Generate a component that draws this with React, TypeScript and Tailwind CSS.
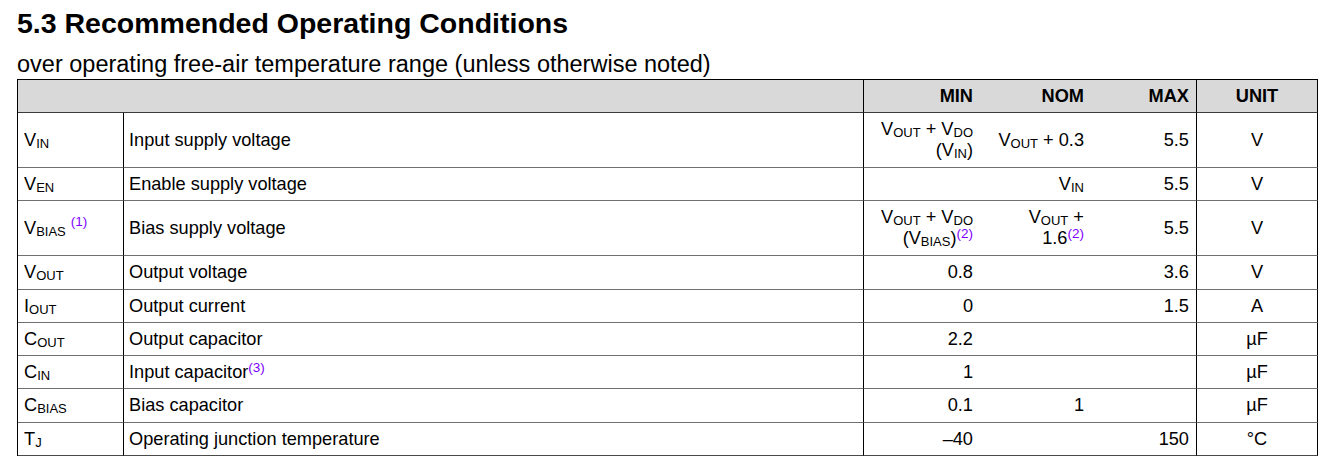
import React from "react";

const Sub = ({ children }: { children: React.ReactNode }) => (
  <span className="text-[13px] leading-[0] align-[-2px]">{children}</span>
);

const Sup = ({ children, raise = "r6" }: { children: React.ReactNode; raise?: string }) => (
  <span
    className={
      "text-[13.5px] leading-[0] text-[#8000ff] " +
      (raise === "r8" ? "align-[8px]" : "align-[6px]")
    }
  >
    {children}
  </span>
);

type Row = {
  sym: React.ReactNode;
  desc: React.ReactNode;
  min?: React.ReactNode;
  nom?: React.ReactNode;
  max?: React.ReactNode;
  unit: React.ReactNode;
};

const rows: Row[] = [
  {
    sym: (
      <>
        V<Sub>IN</Sub>
      </>
    ),
    desc: "Input supply voltage",
    min: (
      <div className="leading-[21px]">
        <div>
          V<Sub>OUT</Sub> + V<Sub>DO</Sub>
        </div>
        <div>
          (V<Sub>IN</Sub>)
        </div>
      </div>
    ),
    nom: (
      <span>
        V<Sub>OUT</Sub> + 0.3
      </span>
    ),
    max: "5.5",
    unit: "V",
  },
  {
    sym: (
      <>
        V<Sub>EN</Sub>
      </>
    ),
    desc: "Enable supply voltage",
    nom: (
      <span>
        V<Sub>IN</Sub>
      </span>
    ),
    max: "5.5",
    unit: "V",
  },
  {
    sym: (
      <>
        V<Sub>BIAS</Sub> <Sup raise="r8">(1)</Sup>
      </>
    ),
    desc: "Bias supply voltage",
    min: (
      <div className="leading-[21px]">
        <div>
          V<Sub>OUT</Sub> + V<Sub>DO</Sub>
        </div>
        <div>
          (V<Sub>BIAS</Sub>)<Sup>(2)</Sup>
        </div>
      </div>
    ),
    nom: (
      <div className="leading-[21px]">
        <div>
          V<Sub>OUT</Sub> +
        </div>
        <div>
          1.6<Sup>(2)</Sup>
        </div>
      </div>
    ),
    max: "5.5",
    unit: "V",
  },
  {
    sym: (
      <>
        V<Sub>OUT</Sub>
      </>
    ),
    desc: "Output voltage",
    min: "0.8",
    max: "3.6",
    unit: "V",
  },
  {
    sym: (
      <>
        I<Sub>OUT</Sub>
      </>
    ),
    desc: "Output current",
    min: "0",
    max: "1.5",
    unit: "A",
  },
  {
    sym: (
      <>
        C<Sub>OUT</Sub>
      </>
    ),
    desc: "Output capacitor",
    min: "2.2",
    unit: "µF",
  },
  {
    sym: (
      <>
        C<Sub>IN</Sub>
      </>
    ),
    desc: (
      <>
        Input capacitor<Sup>(3)</Sup>
      </>
    ),
    min: "1",
    unit: "µF",
  },
  {
    sym: (
      <>
        C<Sub>BIAS</Sub>
      </>
    ),
    desc: "Bias capacitor",
    min: "0.1",
    nom: "1",
    unit: "µF",
  },
  {
    sym: (
      <>
        T<Sub>J</Sub>
      </>
    ),
    desc: "Operating junction temperature",
    min: "–40",
    max: "150",
    unit: "°C",
  },
];

export default function App() {
  return (
    <div
      className="w-[1336px] h-[469px] bg-white text-black pl-[17px] pt-[7px]"
      style={{ fontFamily: '"Liberation Sans", Arial, sans-serif' }}
    >
      <h1 className="text-[28.5px] leading-[32px] font-bold">
        5.3 Recommended Operating Conditions
      </h1>
      <p className="mt-[11px] text-[23.5px] leading-[28px]">
        over operating free-air temperature range (unless otherwise noted)
      </p>
      <div className="mt-[1px] w-[1301px] grid grid-cols-[106px_740px_115px_111px_107px_121px] grid-rows-[33px_55px_33px_55px_34px_33px_33px_33px_34px_33px] border-t border-l border-black text-[18.2px] leading-[21px]">
        {/* header */}
        <div className="col-span-2 bg-[#d9d9d9] border-b border-b-[#3a3a3a] border-r border-r-black" />
        <div className="bg-[#d9d9d9] border-b border-[#3a3a3a] flex items-center justify-end pr-[6px] font-bold">
          MIN
        </div>
        <div className="bg-[#d9d9d9] border-b border-[#3a3a3a] flex items-center justify-end pr-[6px] font-bold">
          NOM
        </div>
        <div className="bg-[#d9d9d9] border-b border-b-[#3a3a3a] border-r border-r-black flex items-center justify-end pr-[7px] font-bold">
          MAX
        </div>
        <div className="bg-[#d9d9d9] border-b border-b-[#3a3a3a] border-r border-r-black flex items-center justify-center font-bold">
          UNIT
        </div>
        {rows.map((r, i) => {
          const last = i === rows.length - 1;
          const hb = last ? "border-b-[#4a4a4a]" : "border-b-[#707070]";
          return (
            <React.Fragment key={i}>
              <div className={"border-b border-r border-r-black flex items-center pl-[6px] whitespace-nowrap " + hb}>
                <span>{r.sym}</span>
              </div>
              <div className={"border-b border-r border-r-black flex items-center pl-[5px] whitespace-nowrap " + hb}>
                <span>{r.desc}</span>
              </div>
              <div className={"border-b flex items-center justify-end text-right pr-[6px] whitespace-nowrap " + hb}>
                {r.min}
              </div>
              <div className={"border-b flex items-center justify-end text-right pr-[6px] whitespace-nowrap " + hb}>
                {r.nom}
              </div>
              <div className={"border-b border-r border-r-black flex items-center justify-end text-right pr-[7px] whitespace-nowrap " + hb}>
                {r.max}
              </div>
              <div className={"border-b border-r border-r-black flex items-center justify-center whitespace-nowrap " + hb}>
                {r.unit}
              </div>
            </React.Fragment>
          );
        })}
      </div>
    </div>
  );
}
